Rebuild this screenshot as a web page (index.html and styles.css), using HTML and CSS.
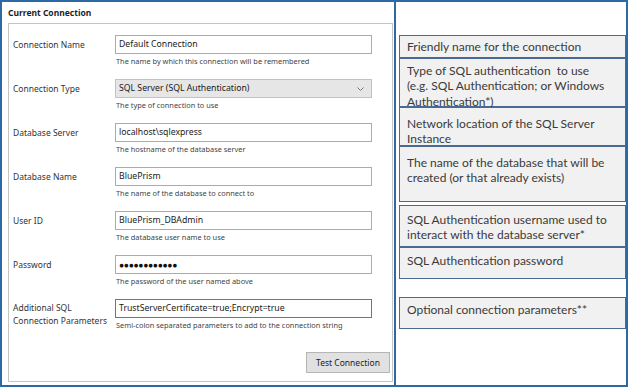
FILE: index.html
```html
<!DOCTYPE html>
<html>
<head>
    <title>Current Connection</title>
    <link rel="stylesheet" href="styles.css">
</head>
<body>
    <div class="frame">
        <section class="panel">
            <h1 class="panel-title">Current Connection</h1>
            <div class="group">
                <div class="row">
                    <label class="label">Connection Name</label>
                    <div class="control">
                        <div class="field">Default Connection</div>
                        <div class="hint">The name by which this connection will be remembered</div>
                    </div>
                </div>
                <div class="row">
                    <label class="label">Connection Type</label>
                    <div class="control">
                        <div class="field select">
                            <span>SQL Server (SQL Authentication)</span>
                            <svg class="chevron" width="9" height="6" viewBox="0 0 9 6"><path d="M1.5 1.5 L4.5 4.5 L7.5 1.5" fill="none" stroke="#777" stroke-width="1"/></svg>
                        </div>
                        <div class="hint">The type of connection to use</div>
                    </div>
                </div>
                <div class="row">
                    <label class="label">Database Server</label>
                    <div class="control">
                        <div class="field">localhost\sqlexpress</div>
                        <div class="hint">The hostname of the database server</div>
                    </div>
                </div>
                <div class="row">
                    <label class="label">Database Name</label>
                    <div class="control">
                        <div class="field">BluePrism</div>
                        <div class="hint">The name of the database to connect to</div>
                    </div>
                </div>
                <div class="row">
                    <label class="label">User ID</label>
                    <div class="control">
                        <div class="field">BluePrism_DBAdmin</div>
                        <div class="hint">The database user name to use</div>
                    </div>
                </div>
                <div class="row">
                    <label class="label">Password</label>
                    <div class="control">
                        <div class="field dots">●●●●●●●●●●●●</div>
                        <div class="hint">The password of the user named above</div>
                    </div>
                </div>
                <div class="row">
                    <label class="label two-line">Additional SQL<br>Connection Parameters</label>
                    <div class="control">
                        <div class="field focus">TrustServerCertificate=true;Encrypt=true</div>
                        <div class="hint">Semi-colon separated parameters to add to the connection string</div>
                    </div>
                </div>
                <div class="actions">
                    <button class="btn">Test Connection</button>
                </div>
            </div>
        </section>
        <aside class="notes">
            <div class="note n-name">Friendly name for the connection</div>
            <div class="note n-type">Type of SQL authentication&nbsp; to use<br>(e.g. SQL Authentication; or Windows<br>Authentication*)</div>
            <div class="note n-server">Network location of the SQL Server<br>Instance</div>
            <div class="note n-db">The name of the database that will be<br>created (or that already exists)</div>
            <div class="note n-user">SQL Authentication username used to<br>interact with the database server*</div>
            <div class="note n-pass">SQL Authentication password</div>
            <div class="note n-params">Optional connection parameters**</div>
        </aside>
    </div>
</body>
</html>
```

FILE: styles.css
```css
* { box-sizing: border-box; }
body { margin: 0; background: #fff; font-family: "Noto Sans", sans-serif; color: #222; }

.frame { display: flex; width: 628px; height: 387px; border: 2px solid #2d6aa5; }

/* left: the dialog group */
.panel { width: 394px; border-right: 2px solid #2d6aa5; padding: 0 1px 3px 6px; display: flex; flex-direction: column; }
.panel-title { margin: 0; height: 21px; line-height: 21px; font-size: 8.5px; font-weight: bold; color: #1e1e1e; }
.group { flex: 1; border: 1px solid #c4c4c4; padding: 11px 2px 8px 4px; display: flex; flex-direction: column; }

.row { display: flex; height: 44px; }
.label { width: 102px; font-size: 8.5px; line-height: 19px; color: #333; }
.label.two-line { line-height: 13px; padding-top: 2px; }
.control { width: 257px; }
.field { height: 19px; border: 1px solid #ababab; background: #fff; padding: 0 3px; font-size: 8.7px; line-height: 17px; color: #1a1a1a; white-space: nowrap; }
.select { background: #e6e6e6; border-color: #c2c2c2; display: flex; align-items: center; justify-content: space-between; padding-right: 6px; }
.select span { line-height: 17px; }
.dots { font-size: 8.5px; letter-spacing: -0.3px; color: #111; }
.focus { border-color: #3c7fd0; }
.hint { font-size: 7.4px; line-height: 14px; color: #444; padding-left: 1px; white-space: nowrap; }

.actions { margin-top: auto; display: flex; justify-content: flex-end; }
.btn { width: 84px; height: 21px; background: #e1e1e1; border: 1px solid #b5b5b5; font-family: "Noto Sans", sans-serif; font-size: 8.5px; color: #222; padding: 0; }

/* right: the explanatory notes */
.notes { flex: 1; display: flex; flex-direction: column; padding: 33px 0 0 3px; }
.note { border: 1px solid #4a6a92; background: #f1f1f1; font-family: Lato, sans-serif; font-size: 12px; line-height: 15.3px; color: #3a3a3a; padding: 4px 0 0 7px; }
.n-name { height: 23px; padding-top: 3px; }
.n-type { height: 49px; padding-top: 4px; }
.n-server { height: 39px; padding-top: 8px; }
.n-db { height: 56px; padding-top: 8px; }
.n-user { height: 42px; margin-top: 3px; padding-top: 6px; }
.n-pass { height: 32px; padding-top: 5px; }
.n-params { height: 32px; margin-top: 18px; }
```
